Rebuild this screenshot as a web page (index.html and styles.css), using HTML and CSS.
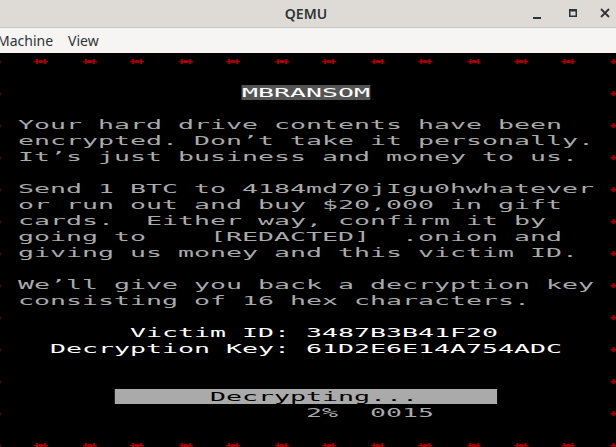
FILE: index.html
```html
<!DOCTYPE html>
<html>
<head>
<meta charset="utf-8">
<title>QEMU</title>
<link rel="stylesheet" href="styles.css">
</head>
<body>
<svg class="defs" width="0" height="0">
  <symbol id="mk" viewBox="0 0 16 16" preserveAspectRatio="none">
    <rect x="1" y="8" width="14" height="1.4" fill="#a80000"/>
    <rect x="3" y="6" width="2" height="5" fill="#a80000"/>
    <rect x="11" y="6" width="2" height="5" fill="#a80000"/>
    <rect x="6" y="7" width="4" height="3" fill="#a80000"/>
  </symbol>
</svg>
<div class="window">
  <div class="titlebar">
    <div></div>
    <div class="title">QEMU</div>
    <div class="controls">
      <svg class="ctl ctl-min" width="16" height="16" viewBox="0 0 16 16"><rect x="4" y="11" width="8" height="2" fill="#2e3436"/></svg>
      <svg class="ctl ctl-max" width="16" height="16" viewBox="0 0 16 16"><rect x="4.75" y="3.75" width="6.5" height="6.5" fill="none" stroke="#2e3436" stroke-width="1.5"/><rect x="4" y="3" width="8" height="2.5" fill="#2e3436"/></svg>
      <svg class="ctl" width="16" height="16" viewBox="0 0 16 16"><path d="M4 3 L12 11 M12 3 L4 11" stroke="#2e3436" stroke-width="1.8"/></svg>
    </div>
  </div>
  <div class="menubar"><span>Machine</span><span>View</span></div>
  <div class="display">
    <div class="screen">
      <div class="border"><svg class="mk"><use href="#mk"/></svg><svg class="mk"><use href="#mk"/></svg><svg class="mk"><use href="#mk"/></svg><svg class="mk"><use href="#mk"/></svg><svg class="mk"><use href="#mk"/></svg><svg class="mk"><use href="#mk"/></svg><svg class="mk"><use href="#mk"/></svg><svg class="mk"><use href="#mk"/></svg><svg class="mk"><use href="#mk"/></svg><svg class="mk"><use href="#mk"/></svg><svg class="mk"><use href="#mk"/></svg><svg class="mk"><use href="#mk"/></svg><svg class="mk"><use href="#mk"/></svg><svg class="mk"><use href="#mk"/></svg></div>
      <div class="row"><span class="nomk"></span><span class="t"></span><span class="nomk"></span></div>
      <div class="row"><svg class="mk"><use href="#mk"/></svg><span class="t">               <span class="hl">MBRANSOM</span></span><svg class="mk"><use href="#mk"/></svg></div>
      <div class="row"><span class="nomk"></span><span class="t"></span><span class="nomk"></span></div>
      <div class="row"><svg class="mk"><use href="#mk"/></svg><span class="t"> Your hard drive contents have been</span><svg class="mk"><use href="#mk"/></svg></div>
      <div class="row"><span class="nomk"></span><span class="t"> encrypted. Don’t take it personally.</span><span class="nomk"></span></div>
      <div class="row"><svg class="mk"><use href="#mk"/></svg><span class="t"> It’s just business and money to us.</span><svg class="mk"><use href="#mk"/></svg></div>
      <div class="row"><span class="nomk"></span><span class="t"></span><span class="nomk"></span></div>
      <div class="row"><svg class="mk"><use href="#mk"/></svg><span class="t"> Send 1 BTC to 4184md70jIgu0hwhatever</span><svg class="mk"><use href="#mk"/></svg></div>
      <div class="row"><span class="nomk"></span><span class="t"> or run out and buy $20,000 in gift</span><span class="nomk"></span></div>
      <div class="row"><svg class="mk"><use href="#mk"/></svg><span class="t"> cards.  Either way, confirm it by</span><svg class="mk"><use href="#mk"/></svg></div>
      <div class="row"><span class="nomk"></span><span class="t"> going to    [REDACTED]  .onion and</span><span class="nomk"></span></div>
      <div class="row"><svg class="mk"><use href="#mk"/></svg><span class="t"> giving us money and this victim ID.</span><svg class="mk"><use href="#mk"/></svg></div>
      <div class="row"><span class="nomk"></span><span class="t"></span><span class="nomk"></span></div>
      <div class="row"><svg class="mk"><use href="#mk"/></svg><span class="t"> We’ll give you back a decryption key</span><svg class="mk"><use href="#mk"/></svg></div>
      <div class="row"><span class="nomk"></span><span class="t"> consisting of 16 hex characters.</span><span class="nomk"></span></div>
      <div class="row"><svg class="mk"><use href="#mk"/></svg><span class="t"></span><svg class="mk"><use href="#mk"/></svg></div>
      <div class="row"><span class="nomk"></span><span class="t w">        Victim ID: 3487B3B41F20</span><span class="nomk"></span></div>
      <div class="row"><svg class="mk"><use href="#mk"/></svg><span class="t w">   Decryption Key: 61D2E6E14A754ADC</span><svg class="mk"><use href="#mk"/></svg></div>
      <div class="row"><span class="nomk"></span><span class="t"></span><span class="nomk"></span></div>
      <div class="row"><svg class="mk"><use href="#mk"/></svg><span class="t"></span><svg class="mk"><use href="#mk"/></svg></div>
      <div class="row"><span class="nomk"></span><span class="t">       <span class="bar">      Decrypting...     </span></span><span class="nomk"></span></div>
      <div class="row"><svg class="mk"><use href="#mk"/></svg><span class="t">                   2%  0015</span><svg class="mk"><use href="#mk"/></svg></div>
      <div class="row"><span class="nomk"></span><span class="t"></span><span class="nomk"></span></div>
      <div class="border"><svg class="mk"><use href="#mk"/></svg><svg class="mk"><use href="#mk"/></svg><svg class="mk"><use href="#mk"/></svg><svg class="mk"><use href="#mk"/></svg><svg class="mk"><use href="#mk"/></svg><svg class="mk"><use href="#mk"/></svg><svg class="mk"><use href="#mk"/></svg><svg class="mk"><use href="#mk"/></svg><svg class="mk"><use href="#mk"/></svg><svg class="mk"><use href="#mk"/></svg><svg class="mk"><use href="#mk"/></svg><svg class="mk"><use href="#mk"/></svg><svg class="mk"><use href="#mk"/></svg><svg class="mk"><use href="#mk"/></svg></div>
    </div>
  </div>
</div>
</body>
</html>
```

FILE: styles.css
```css
html, body {
  margin: 0;
  padding: 0;
  background: #000;
}
body {
  width: 616px;
  height: 447px;
  overflow: hidden;
}
.defs {
  position: absolute;
  width: 0;
  height: 0;
}
.window {
  width: 640px;
  margin-left: -14px;
}
.titlebar {
  height: 27px;
  display: grid;
  grid-template-columns: 1fr auto 1fr;
  align-items: center;
  background: #dedbd7;
  border-bottom: 1px solid #c9c5c0;
  font-family: "Noto Sans", "Open Sans", sans-serif;
}
.title {
  font-size: 14px;
  font-weight: 600;
  color: #2e3436;
}
.controls {
  display: flex;
  justify-content: flex-end;
  align-items: center;
  gap: 16px;
  padding-right: 13px;
}
.ctl {
  display: block;
}
.ctl-min {
  margin-right: 4px;
}
.menubar {
  height: 25px;
  display: flex;
  align-items: center;
  gap: 15px;
  padding-left: 11px;
  background: #f6f5f4;
  font-family: "Noto Sans", "Open Sans", sans-serif;
  font-size: 14px;
  color: #2e3436;
}
.display {
  height: 400px;
  background: #000;
  overflow: hidden;
}
.screen {
  font-family: "DejaVu Sans Mono", monospace;
  font-size: 13px;
  line-height: 16px;
  width: 40ch;
  transform: scaleX(2.0443);
  transform-origin: 0 0;
  color: #aaaaaa;
}
.row {
  display: flex;
  height: 16px;
  white-space: pre;
}
.border {
  display: flex;
  gap: 2ch;
  height: 16px;
}
.mk {
  display: block;
  flex: none;
  width: 1ch;
  height: 16px;
}
.nomk {
  flex: none;
  width: 1ch;
}
.t {
  flex: 1;
  overflow: hidden;
}
.w {
  color: #ffffff;
}
.hl {
  background: #555555;
  color: #ffffff;
}
.bar {
  background: #aaaaaa;
  color: #000000;
}
```
